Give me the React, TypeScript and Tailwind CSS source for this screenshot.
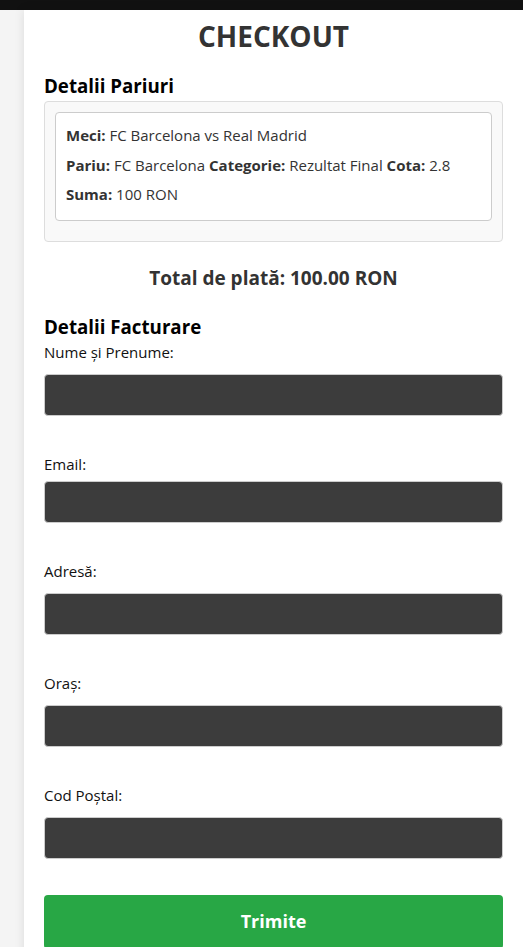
export default function App() {
  const fields = [
    { label: "Nume și Prenume:", gap: "mt-3" },
    { label: "Email:", gap: "mt-[7px]" },
    { label: "Adresă:", gap: "mt-3" },
    { label: "Oraș:", gap: "mt-3" },
    { label: "Cod Poștal:", gap: "mt-3" },
  ];

  return (
    <div className="min-h-screen bg-[#f4f4f4] font-['Open_Sans',sans-serif]">
      <div className="h-[10px] bg-[#111]" />

      <div className="ml-[24px] bg-white px-5 pt-[9px] pb-10 shadow-[0_0_10px_rgba(0,0,0,0.1)]">
        <h1 className="text-center text-[28px] leading-[34px] font-bold text-[#333]">
          CHECKOUT
        </h1>

        {/* Bet details */}
        <h3 className="mt-[21px] text-[18.72px] leading-[24px] font-bold text-black">
          Detalii Pariuri
        </h3>

        <div className="mt-[3px] rounded border border-[#ddd] bg-[#f9f9f9] px-[10px] pt-[10px] pb-5">
          <div className="rounded border border-[#ccc] bg-white px-[10px] pt-[8px] pb-[10px] text-[15px] leading-[29.5px] text-[#333]">
            <p>
              <strong>Meci:</strong> FC Barcelona vs Real Madrid
            </p>
            <p>
              <strong>Pariu:</strong> FC Barcelona <strong>Categorie:</strong> Rezultat Final{" "}
              <strong>Cota:</strong> 2.8
            </p>
            <p>
              <strong>Suma:</strong> 100 RON
            </p>
          </div>
        </div>

        <h3 className="mt-[23px] text-center text-[19px] leading-[26px] font-bold text-[#333]">
          Total de plată: 100.00 RON
        </h3>

        {/* Billing */}
        <h3 className="mt-[24px] text-[18.72px] leading-[24px] font-bold text-black">
          Detalii Facturare
        </h3>

        <form className="mt-[3px] flex flex-col gap-[38px]">
          {fields.map((f) => (
            <div key={f.label}>
              <label className="block text-[15px] leading-[20px] text-[#111]">{f.label}</label>
              <input
                type="text"
                className={`${f.gap} block h-[42px] w-full rounded border border-[#ccc] bg-[#3c3c3c] px-3 text-white`}
              />
            </div>
          ))}
        </form>

        <button className="mt-9 h-[54px] w-full rounded bg-[#28a745] text-[18px] font-bold text-white">
          Trimite
        </button>
      </div>
    </div>
  );
}
